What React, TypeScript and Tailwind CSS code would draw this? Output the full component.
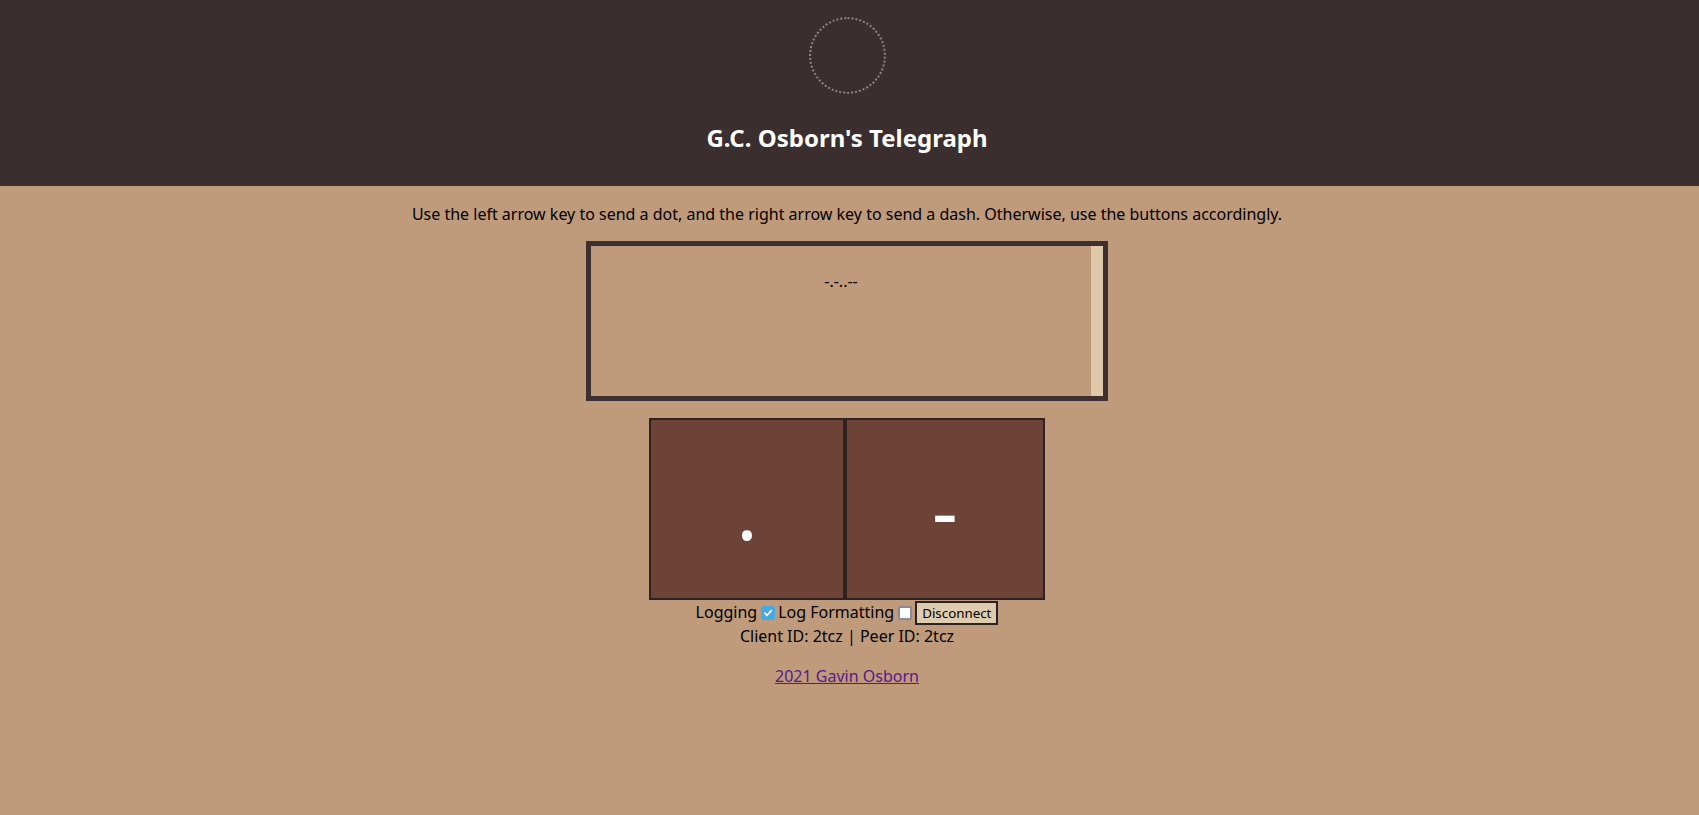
import { useState } from 'react';

export default function App() {
  const [logging, setLogging] = useState(true);
  const [formatting, setFormatting] = useState(false);
  const [morse, setMorse] = useState('-.-..--');

  return (
    <div className="min-h-[815px] bg-[#bf9b7b] text-black font-['Noto_Sans',sans-serif]">
      {/* Header */}
      <header className="bg-[#3a2e2e] flex flex-col items-center pt-[17px] pb-[32px] pr-[5px]">
        <div className="w-[77px] h-[77px] rounded-full border-2 border-dotted border-[#8e8484]" />
        <h1 className="mt-[27px] text-[24px] leading-[33px] font-bold text-white">
          G.C. Osborn's Telegraph
        </h1>
      </header>

      <main className="flex flex-col items-center pr-[5px]">
        <p className="mt-[17px] mb-4 text-[16px] leading-[22px]">
          Use the left arrow key to send a dot, and the right arrow key to send a dash. Otherwise, use the buttons accordingly.
        </p>

        {/* Message box */}
        <div className="w-[522px] h-[160px] border-[5px] border-[#3e3030] flex">
          <div className="flex-1 pt-[24px] text-center text-[16px] leading-[22px]">{morse}</div>
          <div className="w-[12px] bg-[#dfc9aa]" />
        </div>

        {/* Keys */}
        <div className="mt-[17px] flex">
          <button
            onClick={() => setMorse(morse + '.')}
            className="w-[196px] h-[182px] bg-[#6d4337] border-2 border-[#2d2323] text-white text-[80px] flex items-center justify-center"
          >
            .
          </button>
          <button
            onClick={() => setMorse(morse + '-')}
            className="w-[200px] h-[182px] bg-[#6d4337] border-2 border-[#2d2323] text-white text-[80px] flex items-center justify-center"
          >
            -
          </button>
        </div>

        {/* Controls */}
        <div className="flex items-baseline text-[16px]">
          <span>Logging</span>
          <span
            onClick={() => setLogging(!logging)}
            className={`self-start mt-[6px] ml-[4px] mr-[3px] w-[14px] h-[14px] rounded-[2px] flex items-center justify-center ${logging ? 'bg-[#46a9e6]' : 'bg-white border-2 border-[#8a8a96]'}`}
          >
            {logging && (
              <svg width="10" height="10" viewBox="0 0 10 10">
                <path d="M1.8 5.2 L4 7.3 L8.3 2.6" fill="none" stroke="white" strokeWidth="1.7" strokeLinecap="round" strokeLinejoin="round" />
              </svg>
            )}
          </span>
          <span>Log Formatting</span>
          <span
            onClick={() => setFormatting(!formatting)}
            className={`self-start mt-[6px] ml-[4px] mr-[3px] w-[14px] h-[14px] rounded-[2px] flex items-center justify-center ${formatting ? 'bg-[#46a9e6]' : 'bg-white border-2 border-[#8a8a96]'}`}
          >
            {formatting && (
              <svg width="10" height="10" viewBox="0 0 10 10">
                <path d="M1.8 5.2 L4 7.3 L8.3 2.6" fill="none" stroke="white" strokeWidth="1.7" strokeLinecap="round" strokeLinejoin="round" />
              </svg>
            )}
          </span>
          <button className="h-[24px] px-[5px] border-2 border-[#2b2323] bg-[#dfcbad] text-[13.33px] leading-[18px]">
            Disconnect
          </button>
        </div>
        <div className="text-[16px] leading-[22px]">Client ID: 2tcz | Peer ID: 2tcz</div>

        <a href="#" className="mt-[18px] text-[16px] leading-[22px] text-[#551a8b] underline">
          2021 Gavin Osborn
        </a>
      </main>
    </div>
  );
}
